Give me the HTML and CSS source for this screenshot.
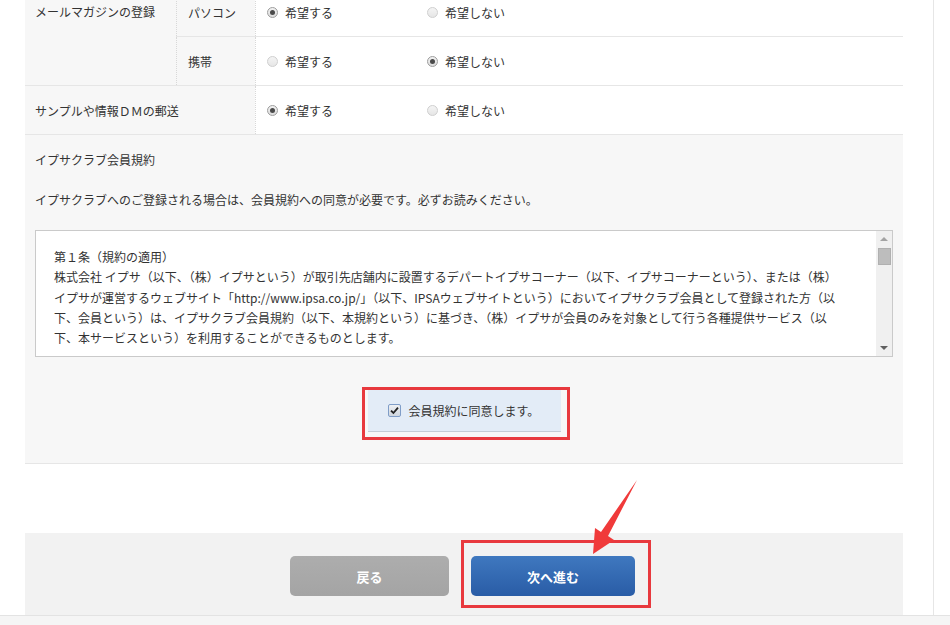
FILE: index.html
```html
<!DOCTYPE html>
<html lang="ja">

<head>
  <meta charset="UTF-8">
  <meta name="viewport" content="width=device-width, initial-scale=1.0">
  <title>会員登録</title>
  <link rel="stylesheet" href="styles.css">
</head>

<body>
  <div class="page">
    <div class="content">

      <div class="form-group">
        <div class="group-label">メールマガジンの登録</div>
        <div class="sub-rows">
          <div class="sub-row">
            <div class="sub-label">パソコン</div>
            <div class="options">
              <label class="opt"><span class="radio checked"></span>希望する</label>
              <label class="opt"><span class="radio"></span>希望しない</label>
            </div>
          </div>
          <div class="sub-row">
            <div class="sub-label">携帯</div>
            <div class="options">
              <label class="opt"><span class="radio"></span>希望する</label>
              <label class="opt"><span class="radio checked"></span>希望しない</label>
            </div>
          </div>
        </div>
      </div>

      <div class="form-row">
        <div class="row-label">サンプルや情報ＤＭの郵送</div>
        <div class="options">
          <label class="opt"><span class="radio checked"></span>希望する</label>
          <label class="opt"><span class="radio"></span>希望しない</label>
        </div>
      </div>

      <div class="terms">
        <p class="terms-title">イプサクラブ会員規約</p>
        <p class="terms-lead">イプサクラブへのご登録される場合は、会員規約への同意が必要です。必ずお読みください。</p>

        <div class="terms-box">
          <div class="terms-text">
            第１条（規約の適用）<br>
            株式会社 イプサ（以下、（株）イプサという）が取引先店舗内に設置するデパートイプサコーナー（以下、イプサコーナーという）、または（株）<br>
            イプサが運営するウェブサイト「http://www.ipsa.co.jp/」（以下、IPSAウェブサイトという）においてイプサクラブ会員として登録された方（以<br>
            下、会員という）は、イプサクラブ会員規約（以下、本規約という）に基づき、（株）イプサが会員のみを対象として行う各種提供サービス（以<br>
            下、本サービスという）を利用することができるものとします。
          </div>
          <div class="scrollbar">
            <span class="sb-up"></span>
            <span class="sb-thumb"></span>
            <span class="sb-fill"></span>
            <span class="sb-down"></span>
          </div>
        </div>

        <div class="agree-wrap">
          <label class="agree">
            <span class="checkbox">
              <svg width="9" height="9" viewBox="0 0 9 9"><path d="M1 4.6 L3.4 7 L8 1.6" fill="none" stroke="#222" stroke-width="1.8"/></svg>
            </span>
            会員規約に同意します。
          </label>
        </div>
      </div>

      <div class="actions">
        <button class="btn btn-back">戻る</button>
        <button class="btn btn-next">次へ進む</button>
      </div>

    </div>
  </div>
  <div class="footer-band"></div>

  <!-- annotation marks -->
  <svg class="marks" width="950" height="625" viewBox="0 0 950 625">
    <rect x="363.5" y="388.5" width="205" height="50" fill="none" stroke="#e8393e" stroke-width="3"/>
    <rect x="462.5" y="541.5" width="187" height="65" fill="none" stroke="#e8393e" stroke-width="3"/>
    <polygon points="637,480 608,536 614,540 593,554 595,528 601,532" fill="#f03a3a"/>
  </svg>
</body>

</html>
```

FILE: styles.css
```css
body {
  margin: 0;
  font-family: "Noto Sans CJK JP", "Noto Sans", sans-serif;
  font-size: 12px;
  color: #333;
  background: #fff;
}

p {
  margin: 0;
}

.page {
  width: 933px;
  height: 627px;
  margin-top: -12px;
  border-right: 1px solid #e6e6e6;
}

.content {
  margin-left: 25px;
  width: 878px;
}

/* form rows */
.form-group {
  display: flex;
  border-bottom: 1px solid #e6e6e6;
}

.group-label {
  box-sizing: border-box;
  width: 151px;
  padding: 15px 10px 0;
  line-height: 18px;
  background: #f7f7f7;
}

.sub-rows {
  flex: 1;
}

.sub-row {
  display: flex;
  height: 48px;
}

.sub-row:first-child {
  border-bottom: 1px solid #e6e6e6;
}

.sub-label {
  box-sizing: border-box;
  width: 79px;
  padding-left: 11px;
  display: flex;
  align-items: center;
  background: #f7f7f7;
  border-left: 1px dotted #d8d8d8;
}

.form-row {
  display: flex;
  height: 48px;
  border-bottom: 1px solid #e6e6e6;
}

.row-label {
  box-sizing: border-box;
  width: 230px;
  padding-left: 10px;
  display: flex;
  align-items: center;
  background: #f7f7f7;
}

.options {
  flex: 1;
  display: flex;
  align-items: center;
  padding-left: 11px;
  border-left: 1px dotted #d8d8d8;
}

.opt {
  width: 160px;
  display: flex;
  align-items: center;
  gap: 7px;
}

.radio {
  box-sizing: border-box;
  width: 11px;
  height: 11px;
  border-radius: 50%;
  border: 1px solid #cfcfcf;
  background: linear-gradient(#f4f4f4, #e6e6e6);
  display: flex;
  align-items: center;
  justify-content: center;
}

.radio.checked {
  border-color: #9d9d9d;
  background: linear-gradient(#f2f2f2, #dcdcdc);
}

.radio.checked::after {
  content: "";
  width: 5px;
  height: 5px;
  border-radius: 50%;
  background: #4a4a4a;
}

/* terms */
.terms {
  background: #f7f7f7;
  padding: 16px 10px 31px;
  border-bottom: 1px solid #e6e6e6;
}

.terms-title,
.terms-lead {
  line-height: 18px;
}

.terms-lead {
  margin-top: 22px;
}

.terms-box {
  margin-top: 21px;
  height: 125px;
  display: flex;
  background: #fff;
  border: 1px solid #cacaca;
}

.terms-text {
  flex: 1;
  overflow: hidden;
  padding: 16px 0 0 18px;
  line-height: 20.25px;
  white-space: nowrap;
}

.scrollbar {
  width: 16px;
  display: flex;
  flex-direction: column;
  align-items: center;
  background: #f0f0f0;
}

.sb-up,
.sb-down {
  height: 16px;
  width: 16px;
  display: flex;
  align-items: center;
  justify-content: center;
}

.sb-up::after,
.sb-down::after {
  content: "";
  border-left: 4px solid transparent;
  border-right: 4px solid transparent;
}

.sb-up::after {
  border-bottom: 4px solid #a3a3a3;
}

.sb-down::after {
  border-top: 4px solid #606060;
}

.sb-thumb {
  width: 13px;
  height: 17px;
  margin-top: 1px;
  background: #bdbdbd;
  border: 1px solid #b0b0b0;
  box-sizing: border-box;
}

.sb-fill {
  flex: 1;
}

/* agree */
.agree-wrap {
  margin-top: 33px;
  display: flex;
  justify-content: center;
}

.agree {
  box-sizing: border-box;
  width: 193px;
  height: 42px;
  padding-left: 20px;
  display: flex;
  align-items: center;
  gap: 8px;
  background: #e3ecf7;
  border-bottom: 1px solid #c5ccd5;
}

.checkbox {
  box-sizing: border-box;
  width: 13px;
  height: 13px;
  border: 1px solid #7f9dc8;
  border-radius: 2px;
  background: linear-gradient(#eef0f3, #cfd6de);
  display: flex;
  align-items: center;
  justify-content: center;
}

/* buttons */
.actions {
  margin-top: 69px;
  height: 82px;
  box-sizing: border-box;
  padding: 23px 3px 0 0;
  background: #f2f2f2;
  display: flex;
  justify-content: center;
  align-items: flex-start;
  gap: 22px;
}

.btn {
  height: 40px;
  border: none;
  border-radius: 5px;
  font-family: inherit;
  font-size: 13px;
  font-weight: bold;
  color: #fff;
  cursor: pointer;
}

.btn-back {
  width: 159px;
  background: linear-gradient(#adadad, #a4a4a4);
}

.btn-next {
  width: 164px;
  background: linear-gradient(#3f78bf, #295ca6);
}

.footer-band {
  height: 10px;
  border-top: 1px solid #e3e3e3;
  background: #f5f5f5;
}

.marks {
  position: absolute;
  left: 0;
  top: 0;
  pointer-events: none;
}
```
